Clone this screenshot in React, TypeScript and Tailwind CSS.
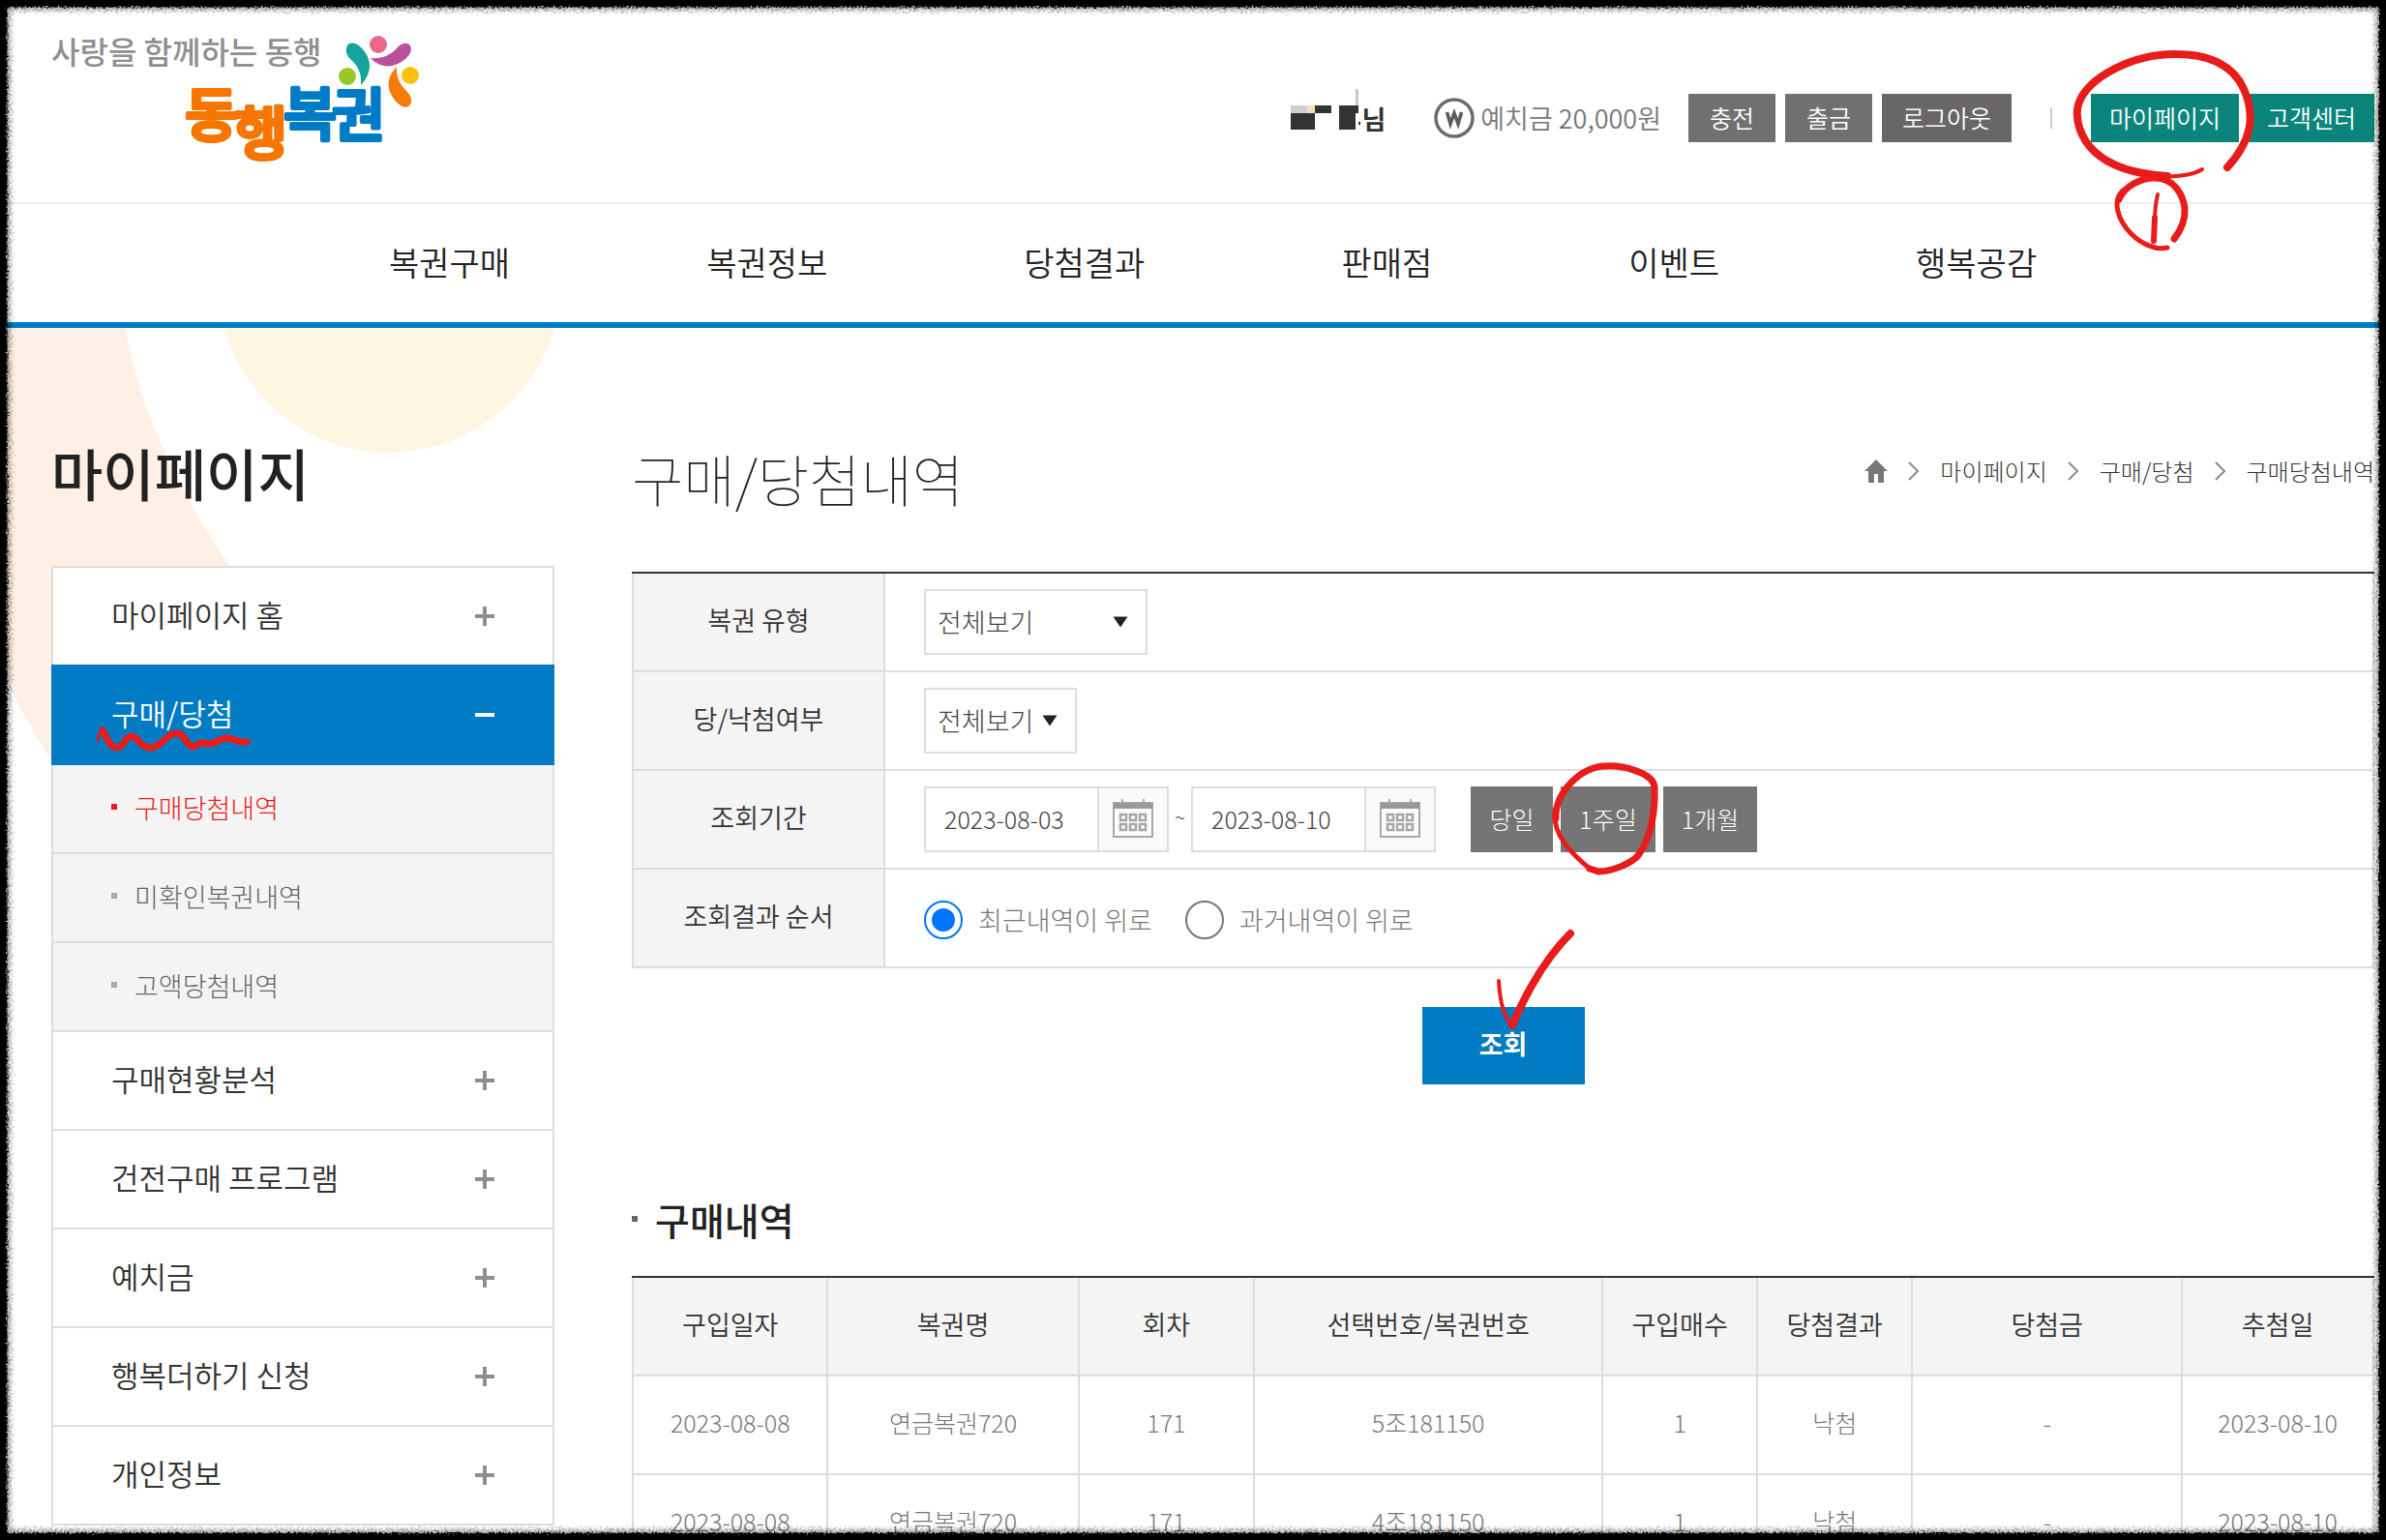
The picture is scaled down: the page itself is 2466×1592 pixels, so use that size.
import React, { useState } from "react";

const RED = "#e81c1a";

function Logo() {
  return (
    <svg width="390" height="180" viewBox="50 12 390 180" role="img" aria-label="동행복권">
      <text x="53" y="66" fontSize="32" fontWeight="500" fill="#8f8f8f">사랑을 함께하는 동행</text>
      <g fontSize="60" fontWeight="500" strokeWidth="4" strokeLinejoin="round">
        <text x="191" y="141" fill="#f57600" stroke="#f57600">동</text>
        <text x="242" y="160" fill="#f57600" stroke="#f57600">행</text>
        <text x="293" y="140" fill="#007bc6" stroke="#007bc6">복</text>
        <text x="343" y="141" fill="#007bc6" stroke="#007bc6">권</text>
      </g>
      <circle cx="391" cy="46" r="9" fill="#e9688a" />
      <circle cx="359" cy="79" r="9" fill="#97c72b" />
      <circle cx="424" cy="78" r="9" fill="#fcc010" />
      <path d="M358 50C359 43 367 43 373 49C384 60 386 74 373 88C374 76 370 68 363 62C359 58 357 54 358 50Z" fill="#13a59b" />
      <path d="M383 60C393 61 402 58 409 51C413 46 418 43 423 46C427 50 424 57 419 61C407 71 393 71 383 60Z" fill="#b9509c" />
      <path d="M410 69C409 78 413 87 420 94C425 99 428 106 422 110C416 113 409 106 405 99C399 88 401 78 410 69Z" fill="#f57c0a" />
    </svg>
  );
}

function MaskedName() {
  return (
    <svg width="73" height="60" viewBox="0 0 73 60" aria-hidden="true">
      <path d="M0 17h17v8h-17z" fill="#cfcfcf" />
      <path d="M17 17h8v8h-8z" fill="#f8dfb4" />
      <path d="M25 17h17v8h-17zM0 25h25v17h-25zM50 17h20v8h-20zM50 25h17v17h-17zM70 34h2v3h-2z" fill="#333" />
      <path d="M67 0h3v17h-3z" fill="#c9c9c9" />
    </svg>
  );
}

function Won() {
  return (
    <svg width="42" height="42" viewBox="0 0 42 42" aria-hidden="true">
      <circle cx="21" cy="21" r="19" fill="none" stroke="#6b6b6b" strokeWidth="3.5" />
      <path d="M13.500 15l3.500 12l4-11l4 11l3.500-12" fill="none" stroke="#5c5c5c" strokeWidth="3.6" />
    </svg>
  );
}

function Calendar() {
  const xs = [8, 18, 28];
  return (
    <svg width="42" height="40" viewBox="0 0 42 40" aria-hidden="true">
      <path d="M10 0v6M32 0v6" stroke="#aaa" strokeWidth="2" />
      <path d="M1 4h40v35h-40z" fill="#fcfcfc" stroke="#a8a8a8" strokeWidth="2" />
      <path d="M1 4h40v6h-40z" fill="#999" />
      {xs.map((x) => (
        <g key={x} fill="none" stroke="#a6a6a6" strokeWidth="2.5">
          <rect x={x} y="16" width="6" height="6" />
          <rect x={x} y="26" width="6" height="6" />
        </g>
      ))}
    </svg>
  );
}

const menuTop = ["복권구매", "복권정보", "당첨결과", "판매점", "이벤트", "행복공감"];
const subMenu = ["구매당첨내역", "미확인복권내역", "고액당첨내역"];
const sideRest = ["구매현황분석", "건전구매 프로그램", "예치금", "행복더하기 신청", "개인정보"];

function TopButton({ label, tone, width }: { label: string; tone: string; width: string }) {
  return <button type="button" className={`h-[50px] shrink-0 pb-0.5 text-[25px] font-[350] leading-none text-white ${tone} ${width}`}>{label}</button>;
}

function Sign({ open }: { open?: boolean }) {
  return (
    <svg width="20" height="20" viewBox="0 0 20 20" aria-hidden="true">
      {open ? <path d="M0 10h20" stroke="#fff" strokeWidth="4" /> : <path d="M0 10h20M10 0v20" stroke="#8e8e8e" strokeWidth="4" />}
    </svg>
  );
}

function SideItem({ label }: { label: string }) {
  return (
    <li className="border-b-2 border-[#ddd] bg-white">
      <a href="#" className="flex h-[100px] items-center justify-between pr-[60px] pl-[60px] text-[31px] font-[350] leading-none text-[#333]">
        <span className="pb-1.5">{label}</span>
        <Sign />
      </a>
    </li>
  );
}

function Picker({ id, width }: { id: string; width: string }) {
  return (
    <div className={`relative h-[68px] ${width}`}>
      <select id={id} className="h-full w-full appearance-none rounded-none border-2 border-[#ddd] bg-white pb-0.5 pl-3 text-[27px] font-light leading-none text-[#444]">
        <option>전체보기</option>
      </select>
      <svg className="pointer-events-none absolute top-7 right-5" width="16" height="12" viewBox="0 0 16 12" aria-hidden="true">
        <path d="M0.5 0.5h15l-7.5 11z" fill="#222" />
      </svg>
    </div>
  );
}

function DateBox({ label, value }: { label: string; value: string }) {
  return (
    <div className="flex h-[68px] w-[253px] border-2 border-[#ddd]">
      <input aria-label={label} defaultValue={value} className="w-[177px] bg-white pl-[19px] text-[25px] font-light text-[#444]" />
      <button type="button" aria-label={`${label} 달력`} className="flex flex-1 items-center justify-center border-l-2 border-[#ddd] bg-[#fafaf9] pb-0.5">
        <Calendar />
      </button>
    </div>
  );
}

function Row({ label, htmlFor, children }: { label: string; htmlFor?: string; children: React.ReactNode }) {
  return (
    <div className="flex h-[102px] border-b-2 border-[#ddd]">
      <div className="flex w-[260px] shrink-0 items-center justify-center border-r-2 border-[#ddd] bg-[#f4f4f4] pb-1.5 text-[27px] font-[350] leading-none text-[#333]">
        {htmlFor ? <label htmlFor={htmlFor}>{label}</label> : <span>{label}</span>}
      </div>
      <div className="flex flex-1 items-center pl-10">{children}</div>
    </div>
  );
}

function Radio({ label, checked, onChange }: { label: string; checked: boolean; onChange: () => void }) {
  return (
    <label className="mr-[34px] flex items-center gap-4 pt-1 text-[27px] font-light leading-none text-[#777]">
      <input
        type="radio"
        name="order"
        checked={checked}
        onChange={onChange}
        className="h-10 w-10 appearance-none rounded-full border-2 border-[#767676] bg-white bg-clip-content p-[6px] checked:border-[#0075ff] checked:bg-[#0075ff]"
      />
      <span className="pb-0.5">{label}</span>
    </label>
  );
}

const columns: [string, string][] = [
  ["구입일자", "w-[11.2%]"],
  ["복권명", "w-[14.4%]"],
  ["회차", "w-[10.1%]"],
  ["선택번호/복권번호", "w-[20%]"],
  ["구입매수", "w-[8.9%]"],
  ["당첨결과", "w-[8.9%]"],
  ["당첨금", "w-[15.500%]"],
  ["추첨일", "w-[11%]"],
];
const rows = [
  ["2023-08-08", "연금복권720", "171", "5조181150", "1", "낙첨", "-", "2023-08-10"],
  ["2023-08-08", "연금복권720", "171", "4조181150", "1", "낙첨", "-", "2023-08-10"],
];

function Crumb({ label }: { label: string }) {
  return (
    <>
      <svg width="12" height="20" viewBox="0 0 12 20" aria-hidden="true">
        <path d="M1 1l9 9l-9 9" fill="none" stroke="#8a8a8a" strokeWidth="2" />
      </svg>
      <a href="#">{label}</a>
    </>
  );
}

function PenMarks() {
  return (
    <svg className="pointer-events-none absolute top-0 left-0 overflow-visible" width="2454" height="1592" viewBox="0 0 2454 1592" fill="none" stroke={RED} strokeLinecap="round" strokeLinejoin="round" aria-hidden="true">
      <path d="M2276 175C2266 182 2240 184 2222 181" strokeWidth="4" />
      <path d="M2240 182C2205 180 2180 171 2165 157C2150 143 2144 123 2148 108C2157 80 2205 55 2250 56C2285 56 2309 69 2319 92C2332 121 2326 147 2302 173" strokeWidth="8" />
      <path d="M2240 256C2228 259 2213 252 2203 242C2188 227 2183 207 2194 197" strokeWidth="5" />
      <path d="M2190 206C2196 192 2213 184 2227 184C2247 184 2256 201 2258 215C2259 227 2254 238 2247 247" strokeWidth="7" />
      <path d="M2230 201C2226 217 2227 232 2226 249" strokeWidth="4" />
      <path d="M2227 225L2226 249" strokeWidth="6" />
      <path d="M101 765C101 760 104 759 105 754" strokeWidth="3" />
      <path d="M106 755C110 760 112 773 121 773C128 773 129 761 136 761C142 761 145 773 155 773C167 773 172 758 182 758C192 758 192 772 200 772C206 770 206 767 210 768C221 772 225 763 235 763C243 764 246 768 255 767" strokeWidth="7" />
      <path d="M1643 898C1625 883 1605 864 1607 840" strokeWidth="5" />
      <path d="M1608 846C1606 820 1635 791 1660 792C1675 791 1709 798 1710 814C1711 840 1706 866 1694 883C1688 892 1666 901 1652 901L1643 898" strokeWidth="7" />
      <path d="M1549 1014C1550 1034 1555 1052 1563 1061" strokeWidth="4" />
      <path d="M1563 1060C1580 1020 1600 988 1623 965" strokeWidth="8" />
    </svg>
  );
}

function TornFrame() {
  return (
    <svg className="pointer-events-none absolute inset-0 h-full w-full" aria-hidden="true">
      <defs>
        <filter id="rough" x="0" y="0" width="100%" height="100%">
          <feTurbulence type="fractalNoise" baseFrequency="0.5" numOctaves="2" seed="4" result="n" />
          <feDisplacementMap in="SourceGraphic" in2="n" scale="7" xChannelSelector="R" yChannelSelector="G" />
        </filter>
        <filter id="dust" x="0" y="0" width="100%" height="100%">
          <feGaussianBlur stdDeviation="2" result="b" />
          <feTurbulence type="fractalNoise" baseFrequency="0.4" numOctaves="2" seed="9" result="n" />
          <feDisplacementMap in="b" in2="n" scale="10" xChannelSelector="R" yChannelSelector="G" />
        </filter>
      </defs>
      <rect width="100%" height="100%" fill="none" stroke="#000" strokeOpacity="0.35" strokeWidth="22" filter="url(#dust)" />
      <rect width="100%" height="100%" rx="6" fill="none" stroke="#000" strokeWidth="15" filter="url(#rough)" />
      <rect width="100%" height="100%" fill="none" stroke="#000" strokeWidth="8" />
    </svg>
  );
}

export default function App() {
  const [recent, setRecent] = useState(true);
  return (
    <div className="relative h-screen overflow-hidden bg-white font-['Noto_Sans_CJK_KR','Noto_Sans',sans-serif]">
      <header>
        <div className="flex h-[211px] items-start justify-between border-b-2 border-[#eee] pr-3 pl-[50px]">
          <a href="#" className="mt-3"><Logo /></a>
          <div className="mt-[97px] flex h-[50px] items-center text-[27px] font-[350] leading-none text-[#777]">
            <MaskedName />
            <strong className="mr-[50px] text-[27px] font-bold text-[#333]">님</strong>
            <Won />
            <span className="mr-[28px] ml-1.5 pb-0.5">예치금 20,000원</span>
            <div className="flex gap-2.5">
              <TopButton label="충전" tone="bg-[#707070]" width="w-[90px]" />
              <TopButton label="출금" tone="bg-[#707070]" width="w-[90px]" />
              <TopButton label="로그아웃" tone="bg-[#686666]" width="w-[134px]" />
            </div>
            <span className="mr-10 ml-10 h-[22px] w-0.5 bg-[#ccc]" />
            <div className="flex gap-2.5">
              <TopButton label="마이페이지" tone="bg-[#0b857c]" width="w-[153px]" />
              <TopButton label="고객센터" tone="bg-[#0b857c]" width="w-[130px]" />
            </div>
          </div>
        </div>
        <nav className="flex h-32 items-center gap-[203px] border-b-6 border-[#007bc4] pb-0.5 pl-[402px] text-[34px] font-[350] leading-none text-[#222]">
          {menuTop.map((m) => <a key={m} href="#" className="whitespace-nowrap">{m}</a>)}
        </nav>
      </header>

      <div className="relative flex items-start gap-20 pr-3 pl-[53px]">
        <svg className="pointer-events-none absolute top-0 left-0" width="600" height="460" viewBox="0 339 600 460" aria-hidden="true">
          <path d="M0 339H130C138 385 150 424 169 464C186 505 210 545 238 585L300 680L53 787C34 755 18 728 0 690Z" fill="#fef0e5" />
          <circle cx="402" cy="290" r="178" fill="#fff6e2" />
        </svg>

        <aside className="relative w-[520px] shrink-0">
          <h2 className="pt-[117px] pb-[65px] text-[58px] font-medium leading-[64px] text-[#222]">마이페이지</h2>
          <ul className="border-t-2 border-r-2 border-l-2 border-[#ddd]">
            <li className="bg-white">
              <a href="#" className="flex h-[100px] items-center justify-between pr-[60px] pl-[60px] text-[31px] font-[350] leading-none text-[#333]">
                <span className="pb-1.5">마이페이지 홈</span>
                <Sign />
              </a>
            </li>
            <li>
              <a href="#" className="-mx-0.5 flex h-[104px] items-center justify-between bg-[#007bc4] pr-[62px] pl-[62px] text-[31px] font-[350] leading-none text-white">
                <span className="pb-1.5">구매/당첨</span>
                <Sign open />
              </a>
              <ul>
                {subMenu.map((s, i) => (
                  <li key={s} className="border-b-2 border-[#ddd] bg-[#f4f4f4]">
                    <a href="#" className={`flex h-[90px] items-center gap-[18px] pb-1 pl-[60px] text-[27px] font-light leading-none ${i === 0 ? "text-[#e81c1a]" : "text-[#666]"}`}>
                      <span className={`size-1.5 ${i === 0 ? "bg-[#e81c1a]" : "bg-[#aaa]"}`} />
                      {s}
                    </a>
                  </li>
                ))}
              </ul>
            </li>
            {sideRest.map((s) => <SideItem key={s} label={s} />)}
          </ul>
        </aside>

        <main className="relative min-w-0 flex-1">
          <div className="flex h-[252px] items-start justify-between">
            <h1 className="pt-[123px] text-[58px] font-thin leading-[64px] text-[#222]">구매/당첨내역</h1>
            <nav className="mt-[128px] flex h-10 items-center gap-[21px] text-[24px] font-light leading-none whitespace-nowrap text-[#333]">
              <a href="#" aria-label="홈">
                <svg width="24" height="24" viewBox="0 0 24 24" aria-hidden="true">
                  <path d="M12 0L24 12H20V24H14V15H10V24H4V12H0Z" fill="#777" />
                </svg>
              </a>
              <Crumb label="마이페이지" />
              <Crumb label="구매/당첨" />
              <Crumb label="구매당첨내역" />
            </nav>
          </div>

          <form onSubmit={(e) => e.preventDefault()}>
            <div className="border-t-2 border-t-[#333]">
              <div className="border-r-2 border-l-2 border-[#ddd]">
                <Row label="복권 유형" htmlFor="kind"><Picker id="kind" width="w-[231px]" /></Row>
                <Row label="당/낙첨여부" htmlFor="won"><Picker id="won" width="w-[158px]" /></Row>
                <Row label="조회기간">
                  <DateBox label="시작일" value="2023-08-03" />
                  <span className="w-[23px] pb-1 text-center text-xl font-light text-[#444]">~</span>
                  <DateBox label="종료일" value="2023-08-10" />
                  <div className="ml-9 flex gap-2 text-[25px] font-light leading-none text-white">
                    <button type="button" className="h-[68px] w-[85px] bg-[#757575] pb-0.5">당일</button>
                    <button type="button" className="h-[68px] w-[98px] bg-[#757575] pb-0.5">1주일</button>
                    <button type="button" className="h-[68px] w-[97px] bg-[#757575] pb-0.5">1개월</button>
                  </div>
                </Row>
                <Row label="조회결과 순서">
                  <Radio label="최근내역이 위로" checked={recent} onChange={() => setRecent(true)} />
                  <Radio label="과거내역이 위로" checked={!recent} onChange={() => setRecent(false)} />
                </Row>
              </div>
            </div>
            <div className="mt-10 flex justify-center">
              <button type="submit" className="h-20 w-[168px] bg-[#007bc4] pb-1.5 text-[27px] font-bold leading-none text-white">조회</button>
            </div>
          </form>

          <h3 className="mt-[127px] mb-[47px] flex h-6 items-center gap-[18px] text-[39px] font-medium leading-none text-[#222]">
            <span className="size-1.5 bg-[#666]" />
            구매내역
          </h3>
          <div className="border-t-2 border-[#333]">
            <table className="w-full table-fixed border-separate border-spacing-0 border-l-2 border-[#ddd] text-center leading-none">
              <thead>
                <tr className="h-[102px]">
                  {columns.map(([c, w]) => (
                    <th key={c} scope="col" className={`border-r-2 border-b-2 border-[#ddd] bg-[#f4f4f4] pb-1.5 text-[27px] font-[350] text-[#333] ${w}`}>{c}</th>
                  ))}
                </tr>
              </thead>
              <tbody>
                {rows.map((r, i) => (
                  <tr key={i} className="h-[102px]">
                    {r.map((c, j) => <td key={j} className="border-r-2 border-b-2 border-[#ddd] pb-1.5 text-[25px] font-light text-[#777]">{c}</td>)}
                  </tr>
                ))}
              </tbody>
            </table>
          </div>
        </main>
      </div>

      <PenMarks />
      <TornFrame />
    </div>
  );
}
